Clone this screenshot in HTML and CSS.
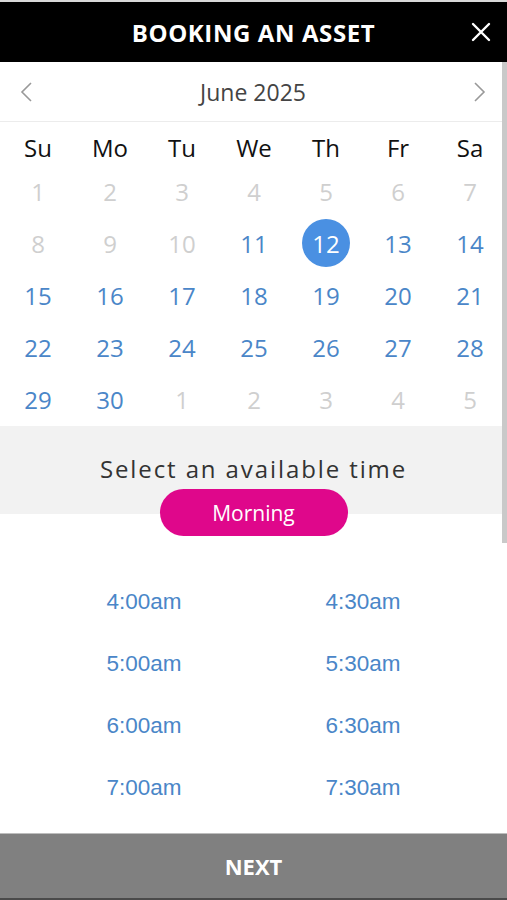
FILE: index.html
```html
<!DOCTYPE html>
<html lang="en">

<head>
    <meta charset="UTF-8">
    <meta name="viewport" content="width=device-width, initial-scale=1.0">
    <title>Booking an asset</title>
    <link rel="stylesheet" href="styles.css">
</head>

<body>
    <header class="topbar">
        <span></span>
        <h1>BOOKING AN ASSET</h1>
        <button class="close" aria-label="close">
            <svg width="20" height="20" viewBox="0 0 20 20">
                <path d="M2 2 L18 18 M18 2 L2 18" stroke="#fff" stroke-width="2.4" stroke-linecap="round" />
            </svg>
        </button>
    </header>

    <main class="page">
        <div class="thumb"></div>

        <div class="month">
            <svg class="chev" width="14" height="22" viewBox="0 0 14 22">
                <path d="M12 2 L3 11 L12 20" fill="none" stroke="#999" stroke-width="1.6" />
            </svg>
            <span>June 2025</span>
            <svg class="chev" width="14" height="22" viewBox="0 0 14 22">
                <path d="M2 2 L11 11 L2 20" fill="none" stroke="#999" stroke-width="1.6" />
            </svg>
        </div>

        <div class="calendar">
            <div class="wd">Su</div>
            <div class="wd">Mo</div>
            <div class="wd">Tu</div>
            <div class="wd">We</div>
            <div class="wd">Th</div>
            <div class="wd">Fr</div>
            <div class="wd">Sa</div>

            <div class="day off">1</div>
            <div class="day off">2</div>
            <div class="day off">3</div>
            <div class="day off">4</div>
            <div class="day off">5</div>
            <div class="day off">6</div>
            <div class="day off">7</div>

            <div class="day off">8</div>
            <div class="day off">9</div>
            <div class="day off">10</div>
            <div class="day">11</div>
            <div class="day"><span class="sel">12</span></div>
            <div class="day">13</div>
            <div class="day">14</div>

            <div class="day">15</div>
            <div class="day">16</div>
            <div class="day">17</div>
            <div class="day">18</div>
            <div class="day">19</div>
            <div class="day">20</div>
            <div class="day">21</div>

            <div class="day">22</div>
            <div class="day">23</div>
            <div class="day">24</div>
            <div class="day">25</div>
            <div class="day">26</div>
            <div class="day">27</div>
            <div class="day">28</div>

            <div class="day">29</div>
            <div class="day">30</div>
            <div class="day off">1</div>
            <div class="day off">2</div>
            <div class="day off">3</div>
            <div class="day off">4</div>
            <div class="day off">5</div>
        </div>

        <section class="pick">
            <h2>Select an available time</h2>
            <button class="pill">Morning</button>
        </section>

        <div class="times">
            <a>4:00am</a>
            <a>4:30am</a>
            <a>5:00am</a>
            <a>5:30am</a>
            <a>6:00am</a>
            <a>6:30am</a>
            <a>7:00am</a>
            <a>7:30am</a>
        </div>
    </main>

    <footer class="next">NEXT</footer>
</body>

</html>
```

FILE: styles.css
```css
html,
body {
    margin: 0px;
    padding: 0px;
    height: 100%;
}

body {
    display: flex;
    flex-direction: column;
    background-color: #ffffff;
    font-family: "Open Sans", sans-serif;
    overflow: hidden;
}

.topbar {
    flex-shrink: 0;
    height: 60px;
    border-top: 2px solid #d8d8d8;
    background-color: #000000;
    display: grid;
    grid-template-columns: 1fr auto 1fr;
    align-items: center;
}

.topbar h1 {
    margin: 0px;
    color: #ffffff;
    font-family: "Open Sans", sans-serif;
    font-weight: 700;
    font-size: 24px;
    letter-spacing: 0.6px;
}

.close {
    justify-self: end;
    margin-right: 16px;
    padding: 0px;
    background: none;
    border: none;
    display: flex;
}

.page {
    flex: 1;
    min-height: 0px;
    overflow: hidden;
    position: relative;
}

.thumb {
    position: absolute;
    top: 0px;
    right: 0px;
    width: 5px;
    height: 481px;
    background-color: #c9c9c9;
}

.month {
    height: 59px;
    border-bottom: 1px solid #ececec;
    display: flex;
    align-items: center;
    justify-content: space-between;
    padding: 0px 20px 0px 19px;
    color: #444444;
    font-size: 23px;
}

.calendar {
    display: grid;
    grid-template-columns: repeat(7, 72px);
    grid-auto-rows: 52px;
    grid-template-rows: 43px;
    padding-left: 2px;
}

.wd {
    display: flex;
    align-items: flex-end;
    justify-content: center;
    color: #111111;
    font-size: 24px;
    line-height: 34px;
}

.day {
    display: flex;
    align-items: center;
    justify-content: center;
    color: #4a86c8;
    font-size: 24px;
}

.day.off {
    color: #cfcfcf;
}

.sel {
    width: 48px;
    height: 48px;
    border-radius: 50%;
    background-color: #4a90e2;
    color: #ffffff;
    display: flex;
    align-items: center;
    justify-content: center;
}

.pick {
    margin-top: 1px;
    background: linear-gradient(#f2f2f2 88px, #ffffff 88px);
    display: flex;
    flex-direction: column;
    align-items: center;
    padding-top: 26px;
}

.pick h2 {
    margin: 0px;
    color: #333333;
    font-weight: normal;
    font-size: 24px;
    letter-spacing: 1.9px;
    line-height: 34px;
}

.pill {
    margin-top: 3px;
    width: 188px;
    height: 47px;
    border: none;
    border-radius: 24px;
    background-color: #df078b;
    color: #ffffff;
    font-family: "Open Sans", sans-serif;
    font-size: 21px;
}

.times {
    width: 438px;
    margin: 51px auto 0px;
    display: grid;
    grid-template-columns: 1fr 1fr;
    grid-auto-rows: 62px;
}

.times a {
    text-align: center;
    color: #4a86c8;
    font-family: "Liberation Sans", Arial, sans-serif;
    font-size: 22.5px;
    line-height: 30px;
}

.next {
    flex-shrink: 0;
    height: 64px;
    border-top: 1px solid #bdbdbd;
    border-bottom: 2px solid #4a4a4a;
    background-color: #808080;
    color: #ffffff;
    font-weight: 700;
    font-size: 22px;
    display: flex;
    align-items: center;
    justify-content: center;
}
```
